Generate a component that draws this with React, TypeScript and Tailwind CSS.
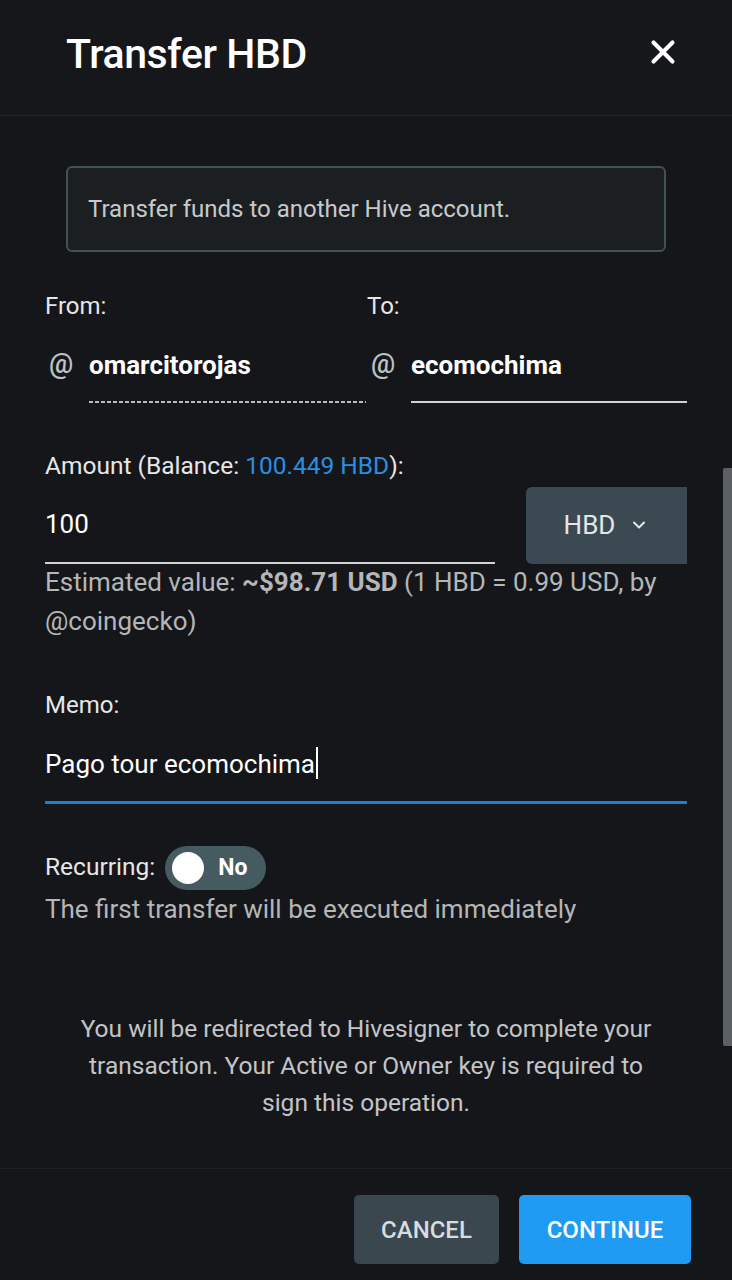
import { X, ChevronDown } from "lucide-react";

export default function App() {
  return (
    <div
      className="flex h-[1280px] w-full flex-col bg-[#15161a] text-white"
      style={{ fontFamily: "Roboto, 'Noto Sans', sans-serif" }}
    >
      <header className="flex h-[116px] shrink-0 items-center justify-between border-b border-[#222428] bg-[#16171a] pl-[66px] pr-[50px]">
        <h1 className="-mt-[6px] text-[41px] font-medium tracking-[-0.01em]">Transfer HBD</h1>
        <X className="-mt-[12px] h-[38px] w-[38px]" strokeWidth={2.6} />
      </header>

      <main className="relative flex-1 overflow-hidden">
        <div className="absolute right-0 top-[352px] h-[578px] w-[9px] rounded-l-[2px] bg-[#5b6064]" />

        <div className="px-[45px] pt-[50px]">
          <div className="mx-[21px] flex h-[86px] items-center rounded-[6px] border-2 border-[#43534f] bg-[#1b1f22] px-[20px] text-[24px] text-[#c7c9cb]">
            Transfer funds to another Hive account.
          </div>

          <div className="mt-[36px] grid grid-cols-2">
            <div>
              <div className="text-[24px] text-[#e6e7e8]">From:</div>
              <div className="mt-[16px] flex items-start">
                <span className="mt-[4px] w-[44px] pl-[4px] text-[27px] font-medium text-[#bfc1c3]">@</span>
                <div className="flex-1">
                  <div className="pb-[16px] pt-[6px] text-[26px] font-bold text-white">omarcitorojas</div>
                  <div className="h-[2px] bg-[repeating-linear-gradient(90deg,#b9bbbd_0_4px,transparent_4px_6px)]" />
                </div>
              </div>
            </div>
            <div className="pl-[1px]">
              <div className="text-[24px] text-[#e6e7e8]">To:</div>
              <div className="mt-[16px] flex items-start">
                <span className="mt-[4px] w-[44px] pl-[4px] text-[27px] font-medium text-[#bfc1c3]">@</span>
                <div className="flex-1 border-b-2 border-[#d0d1d2] pb-[16px] pt-[6px] text-[26px] font-bold text-white">
                  ecomochima
                </div>
              </div>
            </div>
          </div>

          <div className="mt-[45px] text-[24.5px] text-[#e6e7e8]">
            Amount (Balance: <span className="text-[#2a8fe0]">100.449 HBD</span>):
          </div>
          <div className="mt-[2px] flex items-end gap-[31px]">
            <div className="flex-1 border-b-2 border-[#d0d1d2] pb-[18px] text-[26px] text-white">100</div>
            <div className="flex h-[77px] w-[161px] items-center justify-center gap-[14px] rounded-tl-[6px] rounded-bl-[6px] bg-[#3b4a52] text-[26px] text-[#e3e6e8]">
              HBD
              <ChevronDown className="h-[20px] w-[20px]" strokeWidth={2.4} />
            </div>
          </div>
          <p className="-mt-[1px] text-[26px] leading-[39px] text-[#b4b6b8]">
            Estimated value: <span className="font-bold">~$98.71 USD</span> (1 HBD = 0.99 USD, by @coingecko)
          </p>

          <div className="mt-[46px] text-[24px] text-[#e6e7e8]">Memo:</div>
          <div className="mt-[18px] border-b-[3px] border-[#1d7fd0] pb-[17px] text-[26px] text-white">
            Pago tour ecomochima<span className="ml-[1px] inline-block h-[32px] w-[2px] translate-y-[6px] bg-white" />
          </div>

          <div className="mt-[42px] flex items-center gap-[10px]">
            <span className="text-[24.5px] text-[#e6e7e8]">Recurring:</span>
            <div className="flex h-[44px] w-[101px] items-center rounded-full bg-[#455a61] px-[7px]">
              <div className="h-[32px] w-[32px] rounded-full bg-white" />
              <span className="ml-[14px] text-[23px] font-bold text-white">No</span>
            </div>
          </div>
          <p className="mt-0 text-[26px] text-[#b4b6b8]">The first transfer will be executed immediately</p>

          <p className="mx-auto mt-[81px] w-[596px] text-center text-[24.5px] leading-[37px] text-[#c3c5c7]">
            You will be redirected to Hivesigner to complete your transaction. Your Active or Owner key is required to sign this operation.
          </p>
        </div>
      </main>

      <footer className="flex h-[112px] shrink-0 items-start justify-end gap-[20px] border-t border-[#1f2124] bg-[#15161a] pr-[41px] pt-[26px]">
        <button className="h-[69px] w-[145px] rounded-[5px] bg-[#3a474e] text-[24px] font-medium text-[#d8dcde]">
          CANCEL
        </button>
        <button className="h-[69px] w-[172px] rounded-[5px] bg-[#1f9bf3] text-[24px] font-medium text-white">
          CONTINUE
        </button>
      </footer>
    </div>
  );
}
